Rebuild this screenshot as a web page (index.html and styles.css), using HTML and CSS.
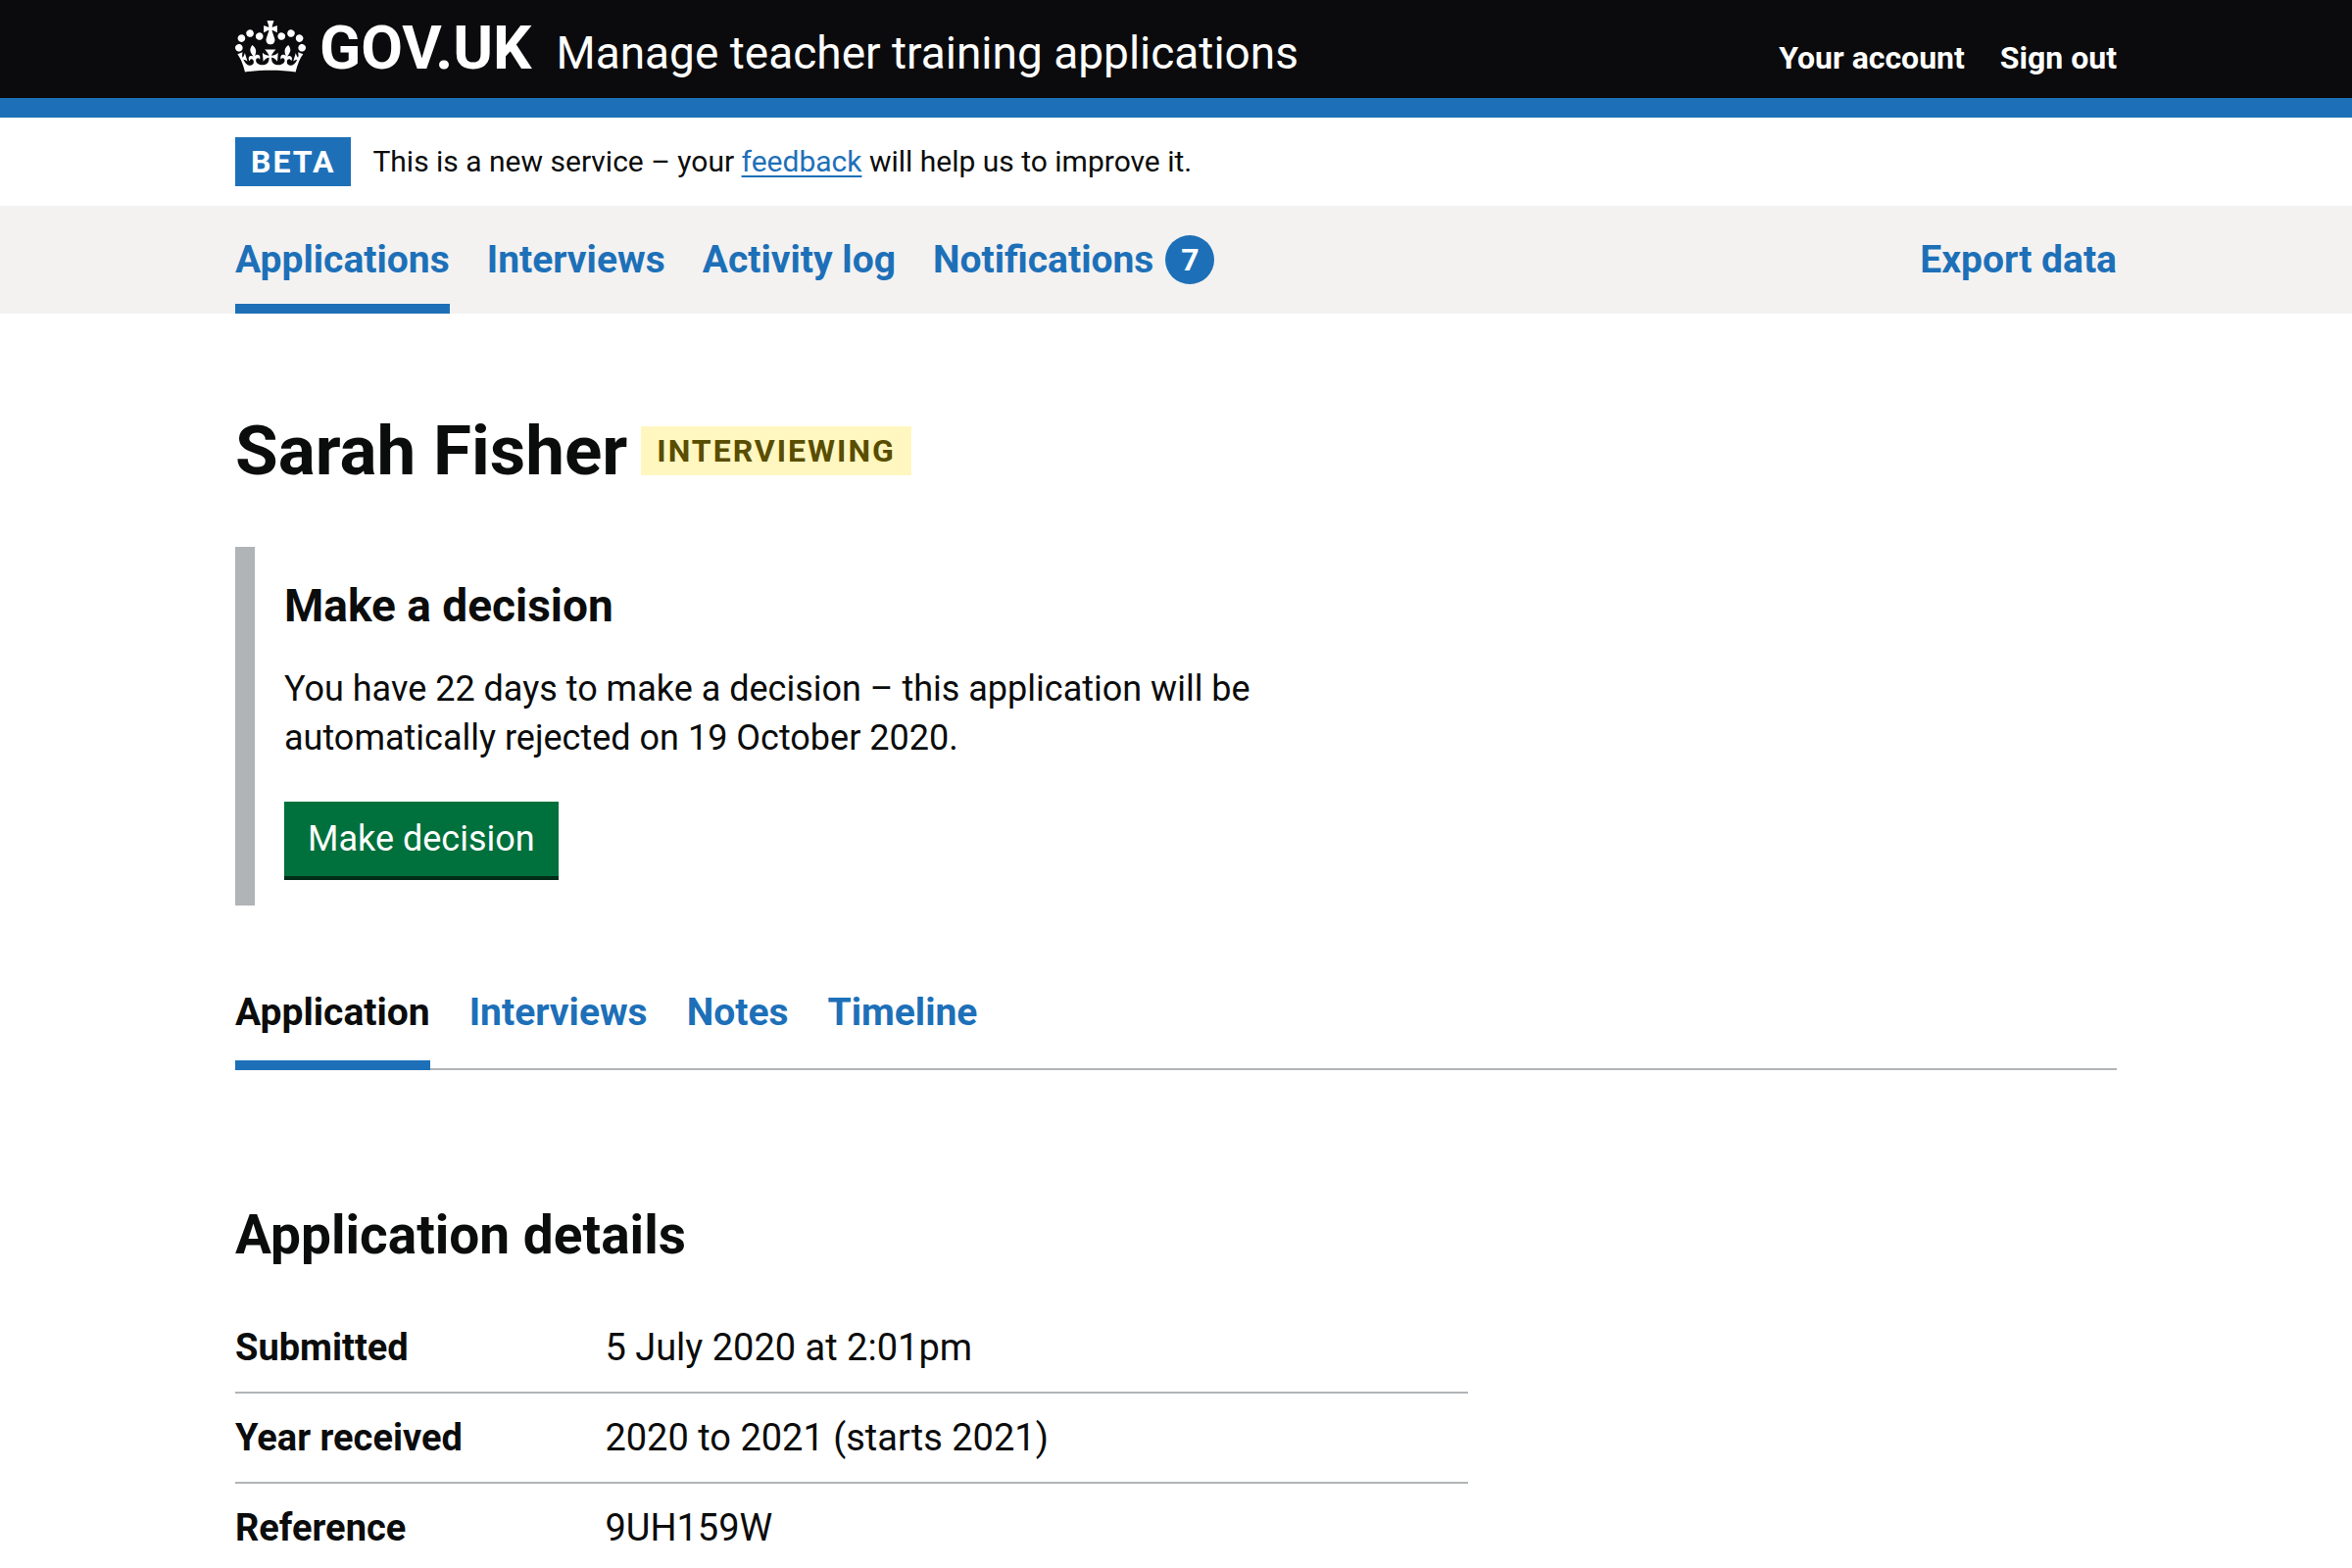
FILE: index.html
```html
<!DOCTYPE html>
<html lang="en">
<head>
<meta charset="utf-8">
<title>Sarah Fisher – Manage teacher training applications – GOV.UK</title>
<meta name="viewport" content="width=device-width, initial-scale=1">
<link rel="stylesheet" href="styles.css">
</head>
<body>
<header class="header">
  <div class="container header-inner">
    <a class="logo" href="#">
      <svg class="crown" viewBox="0 0 132 97" aria-hidden="true"><path fill="currentColor" fill-rule="evenodd" d="M25 30.2c3.5 1.5 7.7-.2 9.1-3.7 1.5-3.6-.2-7.8-3.9-9.2-3.6-1.4-7.6.3-9.1 3.9-1.4 3.5.3 7.5 3.9 9zM9 39.5c3.6 1.5 7.8-.2 9.2-3.7 1.5-3.6-.2-7.8-3.9-9.1-3.6-1.5-7.6.2-9.1 3.8-1.4 3.5.3 7.5 3.8 9zM4.4 57.2c3.5 1.5 7.7-.2 9.1-3.8 1.5-3.6-.2-7.7-3.9-9.1-3.5-1.5-7.6.3-9.1 3.8-1.4 3.5.3 7.6 3.9 9.1zm38.3-21.4c3.5 1.5 7.7-.2 9.1-3.8 1.5-3.6-.2-7.7-3.9-9.1-3.6-1.5-7.6.3-9.1 3.8-1.3 3.6.4 7.7 3.9 9.1zm64.4-5.6c-3.6 1.5-7.8-.2-9.1-3.7-1.5-3.6.2-7.8 3.8-9.2 3.6-1.4 7.7.3 9.2 3.9 1.3 3.5-.4 7.5-3.9 9zm15.9 9.3c-3.6 1.5-7.7-.2-9.1-3.7-1.5-3.6.2-7.8 3.7-9.1 3.6-1.5 7.7.2 9.2 3.8 1.5 3.5-.3 7.5-3.8 9zm4.7 17.7c-3.6 1.5-7.8-.2-9.2-3.8-1.5-3.6.2-7.7 3.9-9.1 3.6-1.5 7.7.3 9.2 3.8 1.3 3.5-.4 7.6-3.9 9.1zM89.3 35.8c-3.6 1.5-7.8-.2-9.2-3.8-1.4-3.6.2-7.7 3.9-9.1 3.6-1.5 7.7.3 9.2 3.8 1.4 3.6-.3 7.7-3.9 9.1zM69.7 17.7l8.9 4.7V9.3l-8.9 2.8c-.2-.3-.5-.6-.9-.9L72.4 0H59.6l3.5 11.2c-.3.3-.6.5-.9.9l-8.8-2.8v13.1l8.8-4.7c.3.3.6.7.9.9l-5 15.4v.1c-.2.8-.4 1.6-.4 2.4 0 4.1 3.1 7.5 7 8.1h.2c.3 0 .7.1 1 .1.4 0 .7 0 1-.1h.2c4-.6 7.1-4.1 7.1-8.1 0-.8-.1-1.7-.4-2.4V34l-5.1-15.4c.4-.2.7-.6 1-.9zM66 92.8c16.9 0 32.8 1.1 47.1 3.2 4-16.9 8.9-26.7 14-33.5l-9.6-3.4c1 4.9 1.1 7.2 0 10.2-1.5-1.4-3-4.3-4.2-8.7L108.6 76c2.8-2 5-3.2 7.5-3.3-4.4 9.4-10 11.9-13.6 11.2-4.3-.8-6.3-4.6-5.6-7.9 1-4.7 5.7-5.9 8-.5 4.3-8.7-3-11.4-7.6-8.8 7.1-7.2 7.9-13.5 2.1-21.1-8 6.1-8.1 12.3-4.5 20.8-4.7-5.4-12.1-2.5-9.5 6.2 3.4-5.2 7.9-2 7.2 3.1-.6 4.3-6.4 7.8-13.5 7.2-10.3-.9-10.9-8-11.2-13.8 2.5-.5 7.1 1.8 11 7.3L80.2 60c-4.1 4.4-8 5.3-12.3 5.4 1.4-4.4 8-11.6 8-11.6H55.5s6.4 7.2 7.9 11.6c-4.2-.1-8-1-12.3-5.4l1.4 16.4c3.9-5.5 8.5-7.7 10.9-7.3-.3 5.8-.9 12.8-11.1 13.8-7.2.6-12.9-2.9-13.5-7.2-.7-5 3.8-8.3 7.1-3.1 2.7-8.7-4.6-11.6-9.4-6.2 3.7-8.5 3.6-14.7-4.6-20.8-5.8 7.6-5 13.9 2.2 21.1-4.7-2.6-11.9.1-7.7 8.8 2.3-5.5 7.1-4.2 8.1.5.7 3.3-1.3 7.1-5.7 7.9-3.5.7-9-1.8-13.5-11.2 2.5.1 4.7 1.3 7.5 3.3l-4.7-15.4c-1.2 4.4-2.7 7.2-4.3 8.7-1.1-3-.9-5.3 0-10.2l-9.5 3.4c5 6.9 9.9 16.7 14 33.5 14.8-2.1 30.8-3.2 47.7-3.2z"/></svg>
      <span class="logotype">GOV.UK</span>
    </a>
    <a class="service-name" href="#">Manage teacher training applications</a>
    <nav class="account" aria-label="Account">
      <a href="#">Your account</a>
      <a href="#">Sign out</a>
    </nav>
  </div>
</header>
<div class="container phase-banner">
  <strong class="tag">BETA</strong>
  <p class="phase-text">This is a new service – your <a href="#">feedback</a> will help us to improve it.</p>
</div>
<div class="primary-nav">
  <nav class="container primary-inner" aria-label="Primary">
    <a class="current" href="#" aria-current="page">Applications</a>
    <a href="#">Interviews</a>
    <a href="#">Activity log</a>
    <a href="#">Notifications <span class="count">7</span></a>
    <a class="export" href="#">Export data</a>
  </nav>
</div>
<main class="container main">
  <div class="title-row">
    <h1>Sarah Fisher</h1>
    <strong class="tag tag-yellow">INTERVIEWING</strong>
  </div>
  <section class="inset">
    <h2 class="heading-m">Make a decision</h2>
    <p class="body-text">You have 22 days to make a decision – this application will be automatically rejected on 19 October 2020.</p>
    <button class="button" type="button">Make decision</button>
  </section>
  <nav class="tabs" aria-label="Application sections">
    <a class="current" href="#" aria-current="page">Application</a>
    <a href="#">Interviews</a>
    <a href="#">Notes</a>
    <a href="#">Timeline</a>
  </nav>
  <section>
    <h2 class="heading-l">Application details</h2>
    <dl class="summary">
      <div class="row"><dt>Submitted</dt><dd>5 July 2020 at 2:01pm</dd></div>
      <div class="row"><dt>Year received</dt><dd>2020 to 2021 (starts 2021)</dd></div>
      <div class="row"><dt>Reference</dt><dd>9UH159W</dd></div>
    </dl>
  </section>
</main>
</body>
</html>
```
FILE: styles.css
```css
* {
  box-sizing: border-box;
}

body {
  margin: 0;
  background: #fff;
  color: #0b0c0c;
  font-family: Roboto, "Liberation Sans", Arial, sans-serif;
  font-size: 38px;
  line-height: 50px;
}

h1, h2, p, dl, dd {
  margin: 0;
}

a {
  color: #1d70b8;
}

.container {
  max-width: 2040px;
  margin: 0 auto;
  padding: 0 60px;
}

/* Header */
.header {
  background: #0b0b0d;
  border-bottom: 20px solid #1d70b8;
}

.header-inner {
  display: flex;
  align-items: baseline;
  padding-top: 13px;
  padding-bottom: 15px;
}

.header a {
  color: #fff;
  text-decoration: none;
}

.logo {
  display: flex;
  align-items: baseline;
  gap: 14px;
  margin-right: 25px;
  font-size: 62px;
  font-weight: 700;
  line-height: 72px;
}

.crown {
  align-self: flex-start;
  width: 72px;
  height: 53px;
  margin-top: 8px;
}

.service-name {
  font-size: 46px;
}

.account {
  display: flex;
  gap: 36px;
  margin-left: auto;
  font-size: 32px;
  font-weight: 700;
}

/* Phase banner */
.phase-banner {
  display: flex;
  align-items: center;
  gap: 22px;
  padding-top: 20px;
  padding-bottom: 20px;
}

.phase-text {
  font-size: 30px;
}

.phase-text a {
  text-decoration-thickness: 2px;
  text-underline-offset: 4px;
}

.tag {
  padding: 0 16px;
  background: #1d70b8;
  color: #fff;
  font-size: 32px;
  font-weight: 700;
  letter-spacing: 2px;
}

.tag-yellow {
  background: #fff7bf;
  color: #594d00;
}

/* Primary navigation */
.primary-nav {
  background: #f3f2f1;
}

.primary-inner {
  display: flex;
  gap: 38px;
  font-size: 39px;
  font-weight: 700;
}

.primary-inner a {
  display: flex;
  align-items: center;
  gap: 12px;
  padding: 30px 0 20px;
  border-bottom: 10px solid transparent;
  text-decoration: none;
}

.primary-inner .current {
  border-bottom-color: #1d70b8;
}

.primary-inner .export {
  margin-left: auto;
}

.count {
  width: 50px;
  border-radius: 50%;
  background: #1d70b8;
  color: #fff;
  font-size: 32px;
  text-align: center;
}

/* Page content */
.main {
  padding-top: 100px;
}

.title-row {
  display: flex;
  align-items: center;
  gap: 14px;
  margin-bottom: 58px;
}

h1 {
  font-size: 71px;
  line-height: 80px;
}

.inset {
  max-width: 1260px;
  margin-bottom: 80px;
  padding: 30px 200px 26px 30px;
  border-left: 20px solid #b1b4b6;
}

.heading-m {
  margin-bottom: 30px;
  font-size: 46px;
  line-height: 60px;
}

.body-text {
  margin-bottom: 40px;
  font-size: 36px;
}

.button {
  display: block;
  padding: 13px 24px;
  border: 0;
  border-bottom: 4px solid #002d18;
  background: #00703c;
  color: #fff;
  font: inherit;
  font-size: 36px;
  cursor: pointer;
}

.tabs {
  display: flex;
  gap: 40px;
  margin-bottom: 138px;
  box-shadow: inset 0 -2px #b1b4b6;
  font-size: 39px;
  font-weight: 700;
}

.tabs a {
  padding: 4px 0 24px;
  border-bottom: 10px solid transparent;
  text-decoration: none;
}

.tabs .current {
  border-bottom-color: #1d70b8;
  color: #0b0c0c;
}

.heading-l {
  margin-bottom: 40px;
  font-size: 55px;
  line-height: 60px;
}

.summary {
  max-width: 1258px;
}

.row {
  display: grid;
  grid-template-columns: 30% 1fr;
  padding: 20px 0;
  border-bottom: 2px solid #b1b4b6;
}

.row:last-child {
  padding-bottom: 0;
  border-bottom: 0;
}

dt {
  font-weight: 700;
}
```
